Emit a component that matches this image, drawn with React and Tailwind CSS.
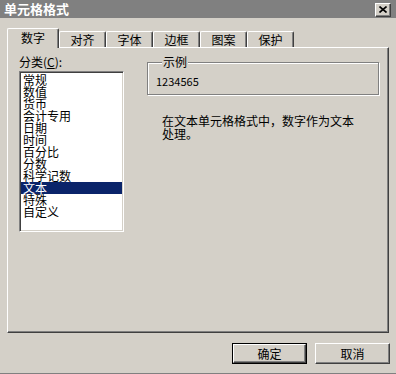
import React from "react";

const font = { fontFamily: '"Noto Sans CJK SC", "Noto Sans", sans-serif' };

const items = ["常规", "数值", "货币", "会计专用", "日期", "时间", "百分比", "分数", "科学记数", "文本", "特殊", "自定义"];
const tabs = ["对齐", "字体", "边框", "图案", "保护"];

export default function App() {
  return (
    <div style={font} className="w-[396px] h-[374px] bg-[#d4d0c8] flex flex-col text-[12px] text-black overflow-hidden border-b border-[#808080]">
      {/* title bar */}
      <div className="h-[18px] bg-[#808080] flex items-center justify-between pl-[4px] pr-[5px] shrink-0">
        <span className="text-white font-bold text-[13px] leading-[14px]">单元格格式</span>
        <div className="w-[16px] h-[14px] mt-[1px] bg-[#d4d0c8] border-t border-l border-white border-r border-b border-r-[#404040] border-b-[#404040] shadow-[inset_-1px_-1px_0_#808080] flex items-center justify-center">
          <svg width="8" height="7" viewBox="0 0 8 7">
            <path d="M0.5 0.5 L7.5 6.5 M7.5 0.5 L0.5 6.5" stroke="#000" strokeWidth="1.6" fill="none" />
          </svg>
        </div>
      </div>

      {/* tabs */}
      <div className="mt-[10px] ml-[7px] h-[19px] flex items-end shrink-0">
        <div className="relative z-10 w-[52px] h-[20px] -mb-[1px] bg-[#d4d0c8] border-l border-t border-white border-r border-r-[#404040] shadow-[inset_-1px_0_0_#808080] rounded-t-[2px] flex justify-center pt-[2px] leading-[14px]">
          数字
        </div>
        {tabs.map((t) => (
          <div key={t} className="w-[47px] h-[16px] border-l border-t border-white border-r border-r-[#404040] shadow-[inset_-1px_0_0_#808080] rounded-t-[2px] flex justify-center pt-[1px] leading-[14px]">
            {t}
          </div>
        ))}
      </div>

      {/* panel */}
      <div className="mx-[7px] h-[286px] shrink-0 border-l border-t border-white border-r border-b border-r-[#404040] border-b-[#404040] shadow-[inset_-1px_-1px_0_#808080] flex pt-[7px] pl-[11px]">
        <div className="flex flex-col w-[105px]">
          <div className="leading-[14px] h-[14px]">
            分类(<span className="underline">C</span>):
          </div>
          <div className="mt-[2px] h-[161px] bg-white border-t border-l border-[#808080] border-b border-r border-b-white border-r-white shadow-[inset_1px_1px_0_#404040,inset_-1px_-1px_0_#d4d0c8] pt-[2px] px-[1px]">
            {items.map((it) => (
              <div
                key={it}
                className={
                  "h-[12px] leading-[12px] pl-[2px] whitespace-nowrap " +
                  (it === "文本" ? "bg-[#0a246a] text-white" : "")
                }
              >
                {it}
              </div>
            ))}
          </div>
        </div>

        <div className="ml-[23px] flex flex-col">
          <fieldset className="w-[232px] h-[40px] border border-[#808080] shadow-[1px_1px_0_#fff,inset_1px_1px_0_#fff] pl-[8px]">
            <legend className="ml-[6px] px-[1px] leading-[14px] bg-[#d4d0c8]">示例</legend>
            <div className="pt-[5px] leading-[14px] text-[11px]">1234565</div>
          </fieldset>
          <div className="mt-[19px] ml-[15px] w-[194px] leading-[13px]">
            在文本单元格格式中，数字作为文本处理。
          </div>
        </div>
      </div>

      {/* buttons */}
      <div className="mt-[10px] flex justify-end gap-[8px] pr-[6px] shrink-0">
        <div className="w-[75px] h-[21px] border border-black">
          <div className="w-full h-full border-t border-l border-white border-r border-b border-r-[#404040] border-b-[#404040] shadow-[inset_-1px_-1px_0_#808080] flex items-center justify-center leading-[14px]">
            确定
          </div>
        </div>
        <div className="w-[75px] h-[21px] border-t border-l border-white border-r border-b border-r-[#404040] border-b-[#404040] shadow-[inset_-1px_-1px_0_#808080] flex items-center justify-center leading-[14px]">
          取消
        </div>
      </div>
    </div>
  );
}
